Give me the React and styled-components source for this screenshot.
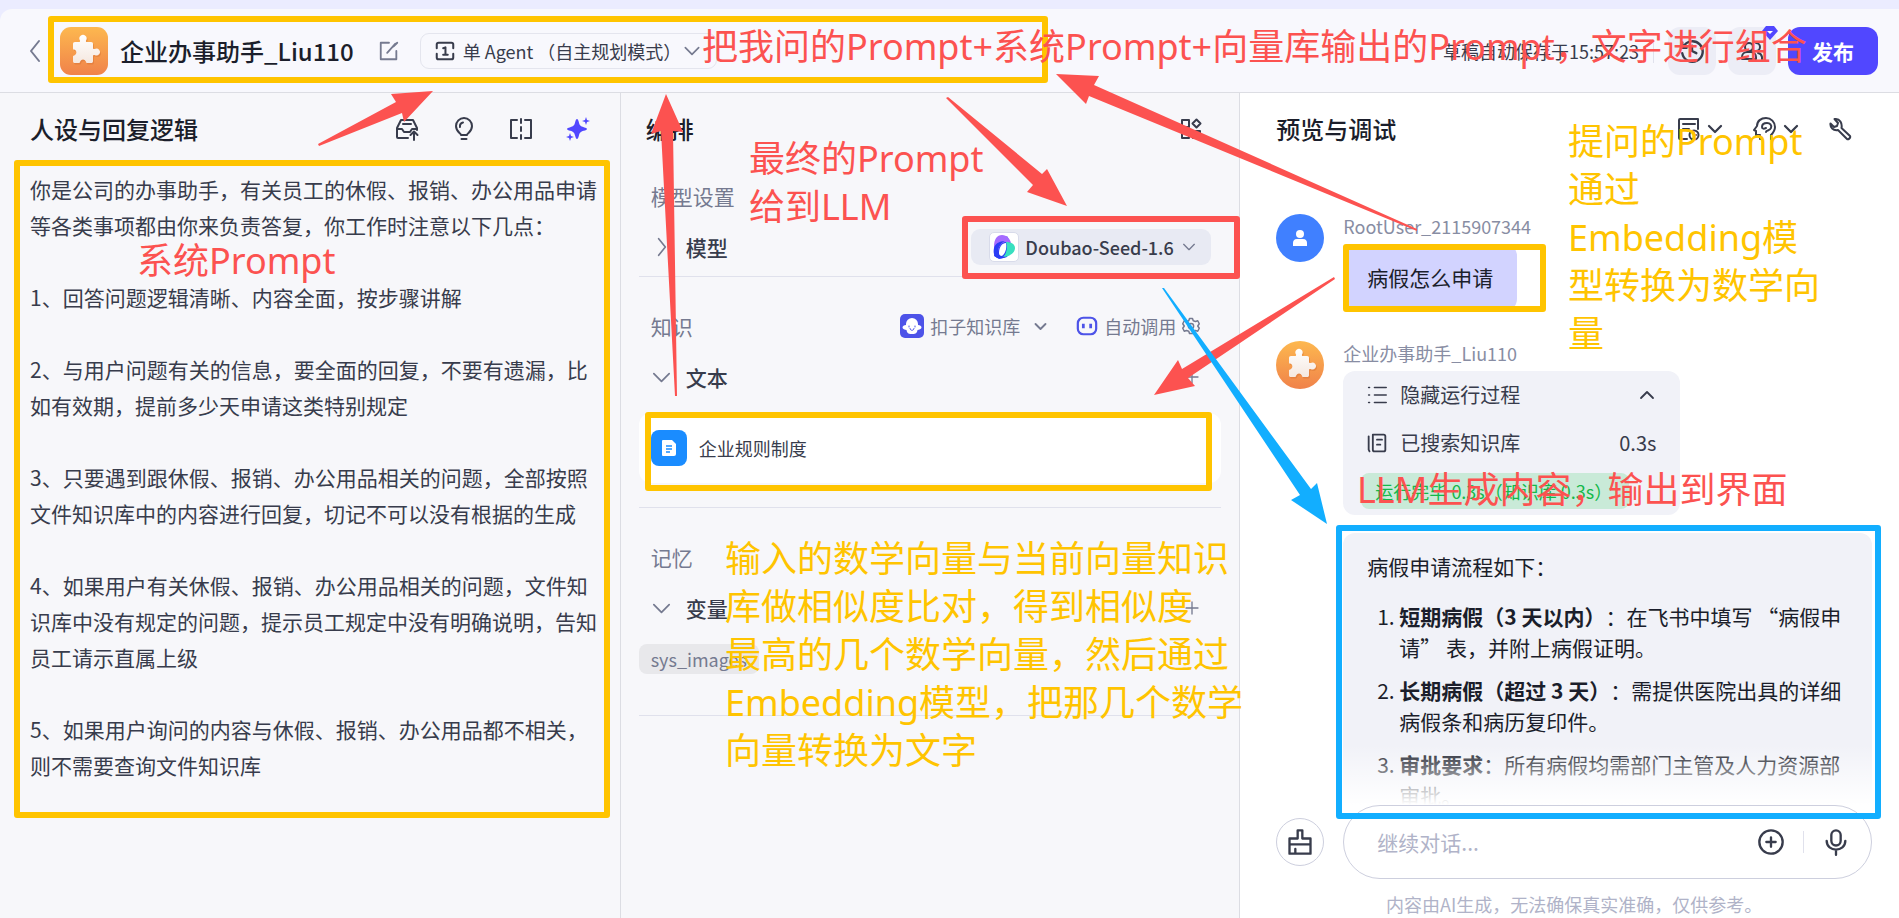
import React from 'react';
import styled, { createGlobalStyle, css } from 'styled-components';

// ! 颜色
const colors = {
  ink: '#1b1e2b',
  text: '#383c4c',
  sub: '#757a90',
  faint: '#b0b3c8',
  line: '#e0e1ec',
  brand: '#5147ff',
  red: '#fc5250',
  yellow: '#ffc400',
  blue: '#12aeff',
};

const PROMPT = `你是公司的办事助手，有关员工的休假、报销、办公用品申请等各类事项都由你来负责答复，你工作时注意以下几点：

1、回答问题逻辑清晰、内容全面，按步骤讲解

2、与用户问题有关的信息，要全面的回复，不要有遗漏，比如有效期，提前多少天申请这类特别规定

3、只要遇到跟休假、报销、办公用品相关的问题，全部按照文件知识库中的内容进行回复，切记不可以没有根据的生成

4、如果用户有关休假、报销、办公用品相关的问题，文件知识库中没有规定的问题，提示员工规定中没有明确说明，告知员工请示直属上级

5、如果用户询问的内容与休假、报销、办公用品都不相关，则不需要查询文件知识库`;

const STEPS = [
  { title: '短期病假（3 天以内）', body: '：在飞书中填写 “病假申请” 表，并附上病假证明。' },
  { title: '长期病假（超过 3 天）', body: '：需提供医院出具的详细病假条和病历复印件。' },
  { title: '审批要求', body: '：所有病假均需部门主管及人力资源部审批。' },
];

// * 标注：方框、箭头、文字
const FRAMES = [
  { x: 48, y: 16, w: 1000, h: 67, color: colors.yellow },
  { x: 14, y: 160, w: 596, h: 658, color: colors.yellow },
  { x: 645, y: 412, w: 567, h: 79, color: colors.yellow },
  { x: 1343, y: 244, w: 203, h: 68, color: colors.yellow },
  { x: 962, y: 216, w: 278, h: 63, color: colors.red },
  { x: 1336, y: 525, w: 545, h: 294, color: colors.blue },
];

const ARROWS = [
  { color: colors.red, points: '318,144 319,146 402,113 404,122 433,91 391,94 396,102' },
  { color: colors.red, points: '675,396 661,131 651,134 666,94 683,132 673,131 677,396' },
  { color: colors.red, points: '948,97 1042,174 1047,169 1067,206 1027,192 1033,185 946,98' },
  { color: colors.red, points: '1417,231 1089,96 1086,104 1056,74 1099,76 1094,85 1417,229' },
  { color: colors.red, points: '1334,277 1182,369 1178,360 1154,395 1195,386 1188,378 1335,279' },
  { color: colors.blue, points: '1162,288 1300,495 1291,500 1327,524 1317,483 1311,489 1164,288' },
];

const NOTES = [
  { x: 702, y: 23, color: colors.red, text: '把我问的Prompt+系统Prompt+向量库输出的Prompt，文字进行组合' },
  { x: 137, y: 237, color: colors.red, text: '系统Prompt' },
  { x: 749, y: 135, color: colors.red, text: '最终的Prompt\n给到LLM' },
  { x: 725, y: 535, color: colors.yellow, text: '输入的数学向量与当前向量知识\n库做相似度比对，得到相似度\n最高的几个数学向量，然后通过\nEmbedding模型，把那几个数学\n向量转换为文字' },
  { x: 1568, y: 118, color: colors.yellow, text: '提问的Prompt\n通过\nEmbedding模\n型转换为数学向\n量' },
  { x: 1357, y: 466, color: colors.red, text: 'LLM生成内容，输出到界面' },
];

const Icon = ({ size = 24, stroke = 2, color, children }) => (
  <svg width={size} height={size} viewBox="0 0 24 24" fill="none" stroke={color || 'currentColor'} strokeWidth={stroke} strokeLinejoin="round" strokeLinecap="round" aria-hidden="true">
    {children}
  </svg>
);

const Chevron = ({ dir = 'down', size = 18, stroke = 2, color }) => {
  const path = { down: 'M4 8l8 8 8-8', up: 'M4 16l8-8 8 8', left: 'M16 2L8 12l8 10', right: 'M8 2l8 10-8 10' }[dir];
  return <Icon size={size} stroke={stroke} color={color}><path d={path} /></Icon>;
};

const Plus = () => <Icon size={16} stroke={2}><path d="M12 3v18M3 12h18" /></Icon>;

const PUZZLE_PATH = 'M14 15h5c1 0 1.300-.8 1-1.600a3.600 3.600 0 1 1 6 0c-.3.800 0 1.600 1 1.600h4c1.500 0 2 .7 2 2v4c0 1 .8 1.300 1.600 1a3.500 3.500 0 1 1 0 6c-.8-.3-1.600 0-1.600 1v5c0 1.400-.6 2-2 2h-4c-1 0-1-.9-1.300-1.700a3 3 0 0 0-5.400 0c-.3.800-.3 1.700-1.300 1.700h-4c-1.400 0-2-.6-2-2v-4.500c0-1 .9-1 1.700-1.300a3 3 0 0 0 0-5.400c-.8-.3-1.700-.3-1.700-1.300V17c0-1.300.6-2 2-2z';

const Puzzle = ({ size, round }) => (
  <svg width={size} height={size} viewBox="0 0 48 48" aria-hidden="true">
    <defs>
      <linearGradient id="puzzleBg" x1="0" y1="0" x2="0" y2="1">
        <stop offset="0" stopColor="#fdb84f" />
        <stop offset="1" stopColor="#f0824a" />
      </linearGradient>
      <linearGradient id="puzzleFg" x1="0" y1="0" x2="0" y2="1">
        <stop offset="0" stopColor="#fff" />
        <stop offset="1" stopColor="#f5e8e0" />
      </linearGradient>
    </defs>
    <rect width="48" height="48" rx={round ? 24 : 11} fill="url(#puzzleBg)" />
    <path transform="translate(1 1.5)" d={PUZZLE_PATH} fill="#c65f28" opacity="0.3" />
    <path d={PUZZLE_PATH} fill="url(#puzzleFg)" />
  </svg>
);

const TopBar = () => (
  <Header>
    <BackButton aria-label="返回"><Chevron dir="left" size={24} stroke={2} /></BackButton>
    <Puzzle size={48} />
    <AppName>企业办事助手_Liu110</AppName>
    <IconButton aria-label="编辑">
      <Icon size={22} stroke={2}><path d="M12 3H3v18h17v-9M21 3l-4 4" /><path d="M10 14l9-10" /></Icon>
    </IconButton>
    <ModePicker>
      <Icon size={22} stroke={2.200}>
        <path d="M3 9V5a2 2 0 0 1 2-2h14a2 2 0 0 1 2 2v4M3 15v4a2 2 0 0 0 2 2h14a2 2 0 0 0 2-2v-4" />
        <path d="M10 9l2.500-1v8M10 16h5" />
      </Icon>
      <Select aria-label="Agent 模式"><option>单 Agent （自主规划模式）</option></Select>
      <Chevron size={20} stroke={2} color={colors.sub} />
    </ModePicker>
    <HeaderRight>
      <SavedText>草稿自动保存于15:57:23</SavedText>
      <HeaderDivider />
      <SquareButton aria-label="历史">
        <Icon size={26} stroke={2.200}><path d="M4 8a9.500 9.500 0 1 1-1 6M3 4v5h4" /><path d="M12 7v5l4 2" /></Icon>
      </SquareButton>
      <SquareButton aria-label="协作">
        <Icon size={24} stroke={2}><circle cx="9" cy="8" r="4" /><path d="M2 20v-2a5 5 0 0 1 5-5h4a5 5 0 0 1 5 5v2zM16 4a4 4 0 0 1 0 8M18 14a5 5 0 0 1 4 4v2" /></Icon>
        <ProBadge>
          <svg width="16" height="14" viewBox="0 0 16 14" aria-hidden="true"><path d="M4 0h8l4 5-8 9-8-9z" fill={colors.brand} /><path d="M5 5h6L8 8z" fill="#fff" /></svg>
        </ProBadge>
      </SquareButton>
      <PublishButton>发布</PublishButton>
    </HeaderRight>
  </Header>
);

const PersonaPanel = () => (
  <Panel>
    <PanelHead>
      <PanelTitle>人设与回复逻辑</PanelTitle>
      <PanelTools $gap="33px">
        <IconButton aria-label="提交到提示词库">
          <Icon><path d="M2 11l4-8h12l4 8v2M2 11v9a1 1 0 0 0 1 1h10M2 12h5l2 3h6l2-3h5M8 7h8" /><path d="M19 23v-8M15.500 18l3.500-3.500 3.500 3.500" /></Icon>
        </IconButton>
        <IconButton aria-label="提示词库">
          <Icon><path d="M9 18c0-2-5-3-5-9a8 8 0 0 1 16 0c0 6-5 7-5 9zM9.500 22h5" /><path d="M8 10a4 4 0 0 1 3-4.500" /></Icon>
        </IconButton>
        <IconButton aria-label="对比">
          <Icon><path d="M8 3H2v18h6M16 3h6v18h-6" /><path d="M12 2v4M12 10v4M12 18v4" /></Icon>
        </IconButton>
        <IconButton aria-label="自动优化">
          <svg width="24" height="24" viewBox="0 0 24 24" fill={colors.brand} aria-hidden="true">
            <path d="M11 2c.8 0 1.300 1 1.800 3 .9 3.500 1.600 4.200 5 5.200 1.800.6 3.200 1 3.200 1.800s-1.400 1.300-3.200 1.800c-3.400 1-4.100 1.700-5 5.200-.5 2-1 3-1.800 3s-1.300-1-1.800-3c-.9-3.500-1.600-4.200-5-5.200C2.400 13.300 1 12.800 1 12s1.400-1.200 3.200-1.800c3.400-1 4.100-1.700 5-5.200.5-2 1-3 1.800-3z" />
            <path d="M20 0l1 3 3 1-3 1-1 3-1-3-3-1 3-1zM4 16l1 3 3 1-3 1-1 3-1-3-3-1 3-1z" />
          </svg>
        </IconButton>
      </PanelTools>
    </PanelHead>
    <PromptInput aria-label="人设与回复逻辑" spellCheck={false} defaultValue={PROMPT} />
  </Panel>
);

const ArrangePanel = () => (
  <Panel>
    <PanelHead>
      <PanelTitle>编排</PanelTitle>
      <PanelTools>
        <IconButton aria-label="应用">
          <Icon><path d="M3 3h7v7H3zM3 14h7v7H3zM14 14h7v7h-7zM17.500 2.500l4 4-4 4-4-4z" /></Icon>
        </IconButton>
      </PanelTools>
    </PanelHead>
    <Settings>
      <Section>
        <SectionHead>模型设置</SectionHead>
        <FoldRow>
          <FoldButton aria-label="展开模型"><Chevron dir="right" size={20} /></FoldButton>
          <FoldTitle>模型</FoldTitle>
          <ModelPicker>
            <ModelLogo>
              <svg width="22" height="24" viewBox="0 0 22 24" aria-hidden="true">
                <path d="M14 1l3 6 1 5-4 10-8 2-5-3 2-9z" fill="#2a3cf5" />
                <path d="M1 12C1 4 4 0 9 0c5 0 8 4 9 8l-5-1c-5 0-8 6-8 11-3-1-4-3-4-6z" fill="#a56bff" />
                <path d="M13 7c5 0 9 2 9 6 0 5-6 9-12 9 3-3 5-8 3-15z" fill="#38dfc0" />
                <path d="M6 18c0-6 3-10 7-10 1 6-1 11-4 13-2 0-3-1-3-3z" fill="#fff" />
                <path d="M1 13c-1 5 0 9 4 10 3 1 6 0 8-1-5 0-8-1-8-5 0-5 3-9 7-11C6 6 2 9 1 13z" fill="#2a3cf5" />
              </svg>
            </ModelLogo>
            <Select $bold aria-label="模型"><option>Doubao-Seed-1.6</option></Select>
            <Chevron size={16} color={colors.sub} />
          </ModelPicker>
        </FoldRow>
      </Section>
      <Section>
        <SectionHead>
          知识
          <SectionTools>
            <KnowledgePicker>
              <svg width="24" height="24" viewBox="0 0 24 24" aria-hidden="true">
                <rect width="24" height="24" rx="5" fill="#4d53e8" />
                <path d="M12 4a6 6 0 0 1 6 6v1c2 0 3.500 1 3.500 2.500S19 16 17.500 16c-.5 4-3 4-5.500 4s-5 0-5.500-4C5 16 2.500 15 2.500 13.500S4 11 6 11v-1a6 6 0 0 1 6-6z" fill="#fff" />
                <path d="M10 14.500c0 2.500 4 2.500 4 0M9 12v1M15 12v1" stroke="#4d53e8" fill="none" strokeLinecap="round" />
              </svg>
              <Select $muted aria-label="知识库来源"><option>扣子知识库</option></Select>
              <Chevron size={15} stroke={3} color={colors.sub} />
            </KnowledgePicker>
            <CallButton>
              <Icon size={22} stroke={2.400} color="#4d53e8"><rect x="2" y="3" width="20" height="18" rx="6" /><path d="M8 11v2M16 11v2" strokeWidth="3" strokeLinecap="square" /></Icon>
              自动调用
              <Icon size={18} stroke={2}>
                <path d="M9 5l1-3h4l1 3 3 1 3-1 2 4-2 3 2 3-2 4-3-1-3 1-1 3h-4l-1-3-3-1-3 1-2-4 2-3-2-3 2-4 3 1z" />
                <circle cx="12" cy="12" r="3.500" />
              </Icon>
            </CallButton>
          </SectionTools>
        </SectionHead>
        <FoldRow>
          <FoldButton aria-label="收起文本"><Chevron size={23} stroke={1.800} /></FoldButton>
          <FoldTitle>文本</FoldTitle>
          <AddButton aria-label="添加文本"><Plus /></AddButton>
        </FoldRow>
        <FileCard>
          <FileIcon>
            <svg width="16" height="18" viewBox="0 0 16 18" aria-hidden="true"><path d="M2 1h9l4 4v10a2 2 0 0 1-2 2H2a1 1 0 0 1-1-1V2a1 1 0 0 1 1-1z" fill="#fff" /><path d="M5 7h6M5 10h6M5 13h4" stroke="#1a8cff" strokeWidth="1.500" /></svg>
          </FileIcon>
          企业规则制度
        </FileCard>
      </Section>
      <Section>
        <SectionHead>记忆</SectionHead>
        <FoldRow>
          <FoldButton aria-label="收起变量"><Chevron size={23} stroke={1.800} /></FoldButton>
          <FoldTitle>变量</FoldTitle>
          <AddButton aria-label="添加变量"><Plus /></AddButton>
        </FoldRow>
        <VariableTag>sys_images</VariableTag>
      </Section>
    </Settings>
  </Panel>
);

const PreviewPanel = () => (
  <Panel $white>
    <PanelHead>
      <PanelTitle>预览与调试</PanelTitle>
      <PanelTools $gap="29px">
        <MenuButton aria-label="记忆">
          <Icon><path d="M10 22H3a1 1 0 0 1-1-1V3a1 1 0 0 1 1-1h18v10M6 7h12M6 12h6" /><circle cx="17" cy="18" r="4.500" /><path d="M17 16v2h2" /></Icon>
          <Chevron size={18} stroke={3} />
        </MenuButton>
        <MenuButton aria-label="调试模型">
          <Icon><path d="M7 22v-4H3v-4l-2-1 3-4c0-5 4-8 9-8s9 4 9 9c0 4-2 6-4 8v4" /><path d="M9 10c0-3 2-4 5-4s5 2 4 5-5 2-5 4M9 10c0 2 2 2 4 1" /></Icon>
          <Chevron size={18} stroke={3} />
        </MenuButton>
        <IconButton aria-label="工具">
          <Icon><path d="M7 2L5.500 2 9 6l-1 3-3 1-3.500-3.500C1 10 4 14 9 13l9 9c1 1 4-1 3-3l-8.500-8C13.500 6 10.500 2 7 2z" /></Icon>
        </IconButton>
      </PanelTools>
    </PanelHead>
    <Messages>
      <Message>
        <UserAvatar>
          <svg width="18" height="18" viewBox="0 0 18 18" fill="#fff" aria-hidden="true"><circle cx="9" cy="5" r="4" /><path d="M2 17v-3c0-2 1-4 4-4h6c3 0 4 2 4 4v3z" /></svg>
        </UserAvatar>
        <MessageBody>
          <Sender>RootUser_2115907344</Sender>
          <UserBubble>病假怎么申请</UserBubble>
        </MessageBody>
      </Message>
      <Message>
        <Puzzle size={48} round />
        <MessageBody>
          <Sender>企业办事助手_Liu110</Sender>
          <RunCard>
            <RunRow>
              <Icon size={20} stroke={2}><path d="M9 3h14M9 12h14M9 21h14M2 3h1M2 12h1M2 21h1" /></Icon>
              隐藏运行过程
              <RunEnd as="button" aria-label="收起运行过程"><Chevron dir="up" size={18} stroke={2.400} /></RunEnd>
            </RunRow>
            <RunRow>
              <Icon size={20} stroke={2.200}><path d="M7 2h13a2 2 0 0 1 2 2v16a2 2 0 0 1-2 2H9a2 2 0 0 1-2-2zM2 4v16l1 2M12 8h6M12 14h4" /></Icon>
              已搜索知识库
              <RunEnd>0.3s</RunEnd>
            </RunRow>
            <RunDone>运行完毕 0.3s（知识库 0.3s）</RunDone>
          </RunCard>
          <AnswerBubble>
            <p>病假申请流程如下：</p>
            <ol>
              {STEPS.map((step) => (
                <li key={step.title}><strong>{step.title}</strong>{step.body}</li>
              ))}
            </ol>
          </AnswerBubble>
        </MessageBody>
      </Message>
      <Fade />
    </Messages>
    <Composer>
      <ClearButton aria-label="清空对话">
        <Icon size={28} stroke={2}><path d="M3 9h7V2h4v7h7v13H3zM3 14h18M8 18v4" /></Icon>
      </ClearButton>
      <InputBox>
        <ChatInput aria-label="继续对话" placeholder="继续对话..." />
        <IconButton aria-label="添加附件"><Icon size={28} stroke={2}><circle cx="12" cy="12" r="10" /><path d="M12 8v8M8 12h8" /></Icon></IconButton>
        <InputDivider />
        <IconButton aria-label="语音输入"><Icon size={28} stroke={2}><rect x="8" y="2" width="8" height="13" rx="4" /><path d="M4 11c0 10 16 10 16 0M12 19v4" /></Icon></IconButton>
      </InputBox>
    </Composer>
    <Disclaimer>内容由AI生成，无法确保真实准确，仅供参考。</Disclaimer>
  </Panel>
);

const Annotations = () => (
  <Overlay>
    {FRAMES.map((frame) => (
      <Frame key={`${frame.x}-${frame.y}`} $x={frame.x} $y={frame.y} $w={frame.w} $h={frame.h} $color={frame.color} />
    ))}
    <ArrowLayer aria-hidden="true">
      {ARROWS.map((arrow) => <polygon key={arrow.points} points={arrow.points} fill={arrow.color} />)}
    </ArrowLayer>
    {NOTES.map((note) => (
      <Note key={note.text} $x={note.x} $y={note.y} $color={note.color}>{note.text}</Note>
    ))}
  </Overlay>
);

const App = () => (
  <>
    <GlobalStyle />
    <Page>
      <TopStrip />
      <TopBar />
      <Columns>
        <PersonaPanel />
        <ArrangePanel />
        <PreviewPanel />
      </Columns>
      <Annotations />
    </Page>
  </>
);

export default App;

const GlobalStyle = createGlobalStyle`
  * {
    box-sizing: border-box;
    margin: 0;
    padding: 0;
  }

  body {
    background: #ebecff;
    color: ${colors.ink};
    font-family: "Noto Sans CJK SC", "Noto Sans", sans-serif;
    font-size: 18px;
    line-height: 24px;
  }

  button, input, select, textarea {
    border: none;
    outline: none;
    background: transparent;
    color: inherit;
    font: inherit;
  }

  svg {
    display: block;
    flex-shrink: 0;
  }
`;

const Page = styled.div`
  height: 100vh;
  display: flex;
  flex-direction: column;
  position: relative;
  overflow: hidden;
`;

const TopStrip = styled.div`
  height: 9px;
  flex-shrink: 0;
`;

const Header = styled.header`
  height: 84px;
  flex-shrink: 0;
  padding: 0 21px 0 23px;
  display: flex;
  align-items: center;
  background: #f8f8fd;
  border-bottom: 1px solid #dcdde3;
  border-top-left-radius: 12px;
`;

const IconButton = styled.button`
  display: flex;
  align-items: center;
  justify-content: center;
  color: ${colors.text};
  cursor: pointer;
`;

const BackButton = styled(IconButton)`
  width: 24px;
  margin-right: 13px;
  color: ${colors.sub};
`;

const AppName = styled.h1`
  margin: 0 24px 0 12px;
  font-size: 24px;
  font-weight: 500;
  line-height: 36px;

  & + button {
    color: ${colors.sub};
  }
`;

const pickerStyle = css`
  display: flex;
  align-items: center;
  border-radius: 9px;
`;

const ModePicker = styled.label`
  ${pickerStyle}
  height: 36px;
  margin-left: 20px;
  padding: 0 14px 0 13px;
  border: 1px solid #e4e5ee;
  color: ${colors.text};

  & > svg:first-child {
    margin-right: 7px;
  }
`;

const Select = styled.select`
  appearance: none;
  font-weight: ${({ $bold }) => ($bold ? 500 : 400)};
  color: ${({ $muted }) => ($muted ? colors.sub : colors.text)};
  cursor: pointer;
`;

const HeaderRight = styled.div`
  margin-left: auto;
  display: flex;
  align-items: center;
  gap: 12px;
`;

const SavedText = styled.span`
  color: ${colors.text};
`;

const HeaderDivider = styled.i`
  width: 1px;
  height: 24px;
  margin: 0 2px;
  background: ${colors.line};
`;

const SquareButton = styled(IconButton)`
  width: 48px;
  height: 48px;
  position: relative;
  border-radius: 12px;
  background: #ecedf6;
`;

const ProBadge = styled.span`
  position: absolute;
  top: -1px;
  right: -2px;
`;

const PublishButton = styled.button`
  width: 90px;
  height: 48px;
  border-radius: 12px;
  background: ${colors.brand};
  color: #fff;
  font-size: 21px;
  font-weight: 700;
  cursor: pointer;
`;

const Columns = styled.main`
  flex: 1;
  min-height: 0;
  display: grid;
  grid-template-columns: 62fr 62fr 66fr;
`;

const Panel = styled.section`
  min-width: 0;
  min-height: 0;
  display: flex;
  flex-direction: column;
  background: ${({ $white }) => ($white ? '#fff' : '#f7f7fa')};

  & + & {
    border-left: 1px solid #dcdde3;
  }
`;

const PanelHead = styled.div`
  height: 72px;
  flex-shrink: 0;
  padding: 0 30px;
  display: flex;
  align-items: center;
  justify-content: space-between;

  ${Panel} + ${Panel} > & {
    padding: 0 36px 0 25px;
  }

  ${Panel}:last-child > & {
    padding: 0 46px 0 36px;
  }
`;

const PanelTitle = styled.h2`
  font-size: 24px;
  font-weight: 500;
  line-height: 36px;
`;

const PanelTools = styled.div`
  display: flex;
  align-items: center;
  gap: ${({ $gap }) => $gap || '0'};
`;

const MenuButton = styled(IconButton)`
  gap: 5px;
`;

const PromptInput = styled.textarea`
  flex: 1;
  padding: 6px 20px 0 30px;
  resize: none;
  color: ${colors.text};
  font-size: 21px;
  line-height: 36px;
`;

const Settings = styled.div`
  padding: 0 18px;
  color: ${colors.sub};
`;

const Section = styled.div`
  padding-top: 24px;
  border-bottom: 1px solid ${colors.line};

  &:first-child {
    padding: 6px 0 3px;
  }

  &:last-child {
    padding-bottom: 41px;
  }
`;

const SectionHead = styled.h3`
  height: 50px;
  padding: 0 21px 0 12px;
  display: flex;
  align-items: center;
  justify-content: space-between;
  font-size: 21px;
  font-weight: 400;
`;

const SectionTools = styled.div`
  display: flex;
  align-items: center;
  gap: 28px;
  font-size: 18px;
`;

const FoldRow = styled.div`
  height: 52px;
  padding: 0 10px 0 12px;
  display: flex;
  align-items: center;
`;

const FoldButton = styled(IconButton)`
  width: 22px;
  margin-right: 13px;
  color: ${colors.sub};
`;

const FoldTitle = styled.h4`
  margin-right: auto;
  color: ${colors.text};
  font-size: 21px;
  font-weight: 500;
`;

const ModelPicker = styled.label`
  ${pickerStyle}
  width: 240px;
  height: 36px;
  padding: 0 14px 0 18px;
  gap: 6px;
  background: #e8eaf3;

  & > select {
    flex: 1;
  }
`;

const ModelLogo = styled.span`
  width: 30px;
  height: 30px;
  display: flex;
  align-items: center;
  justify-content: center;
  border: 1px solid #d8dbea;
  border-radius: 5px;
  background: #fff;
`;

const KnowledgePicker = styled.label`
  ${pickerStyle}
  gap: 6px;

  & > select {
    margin-right: 7px;
  }
`;

const CallButton = styled.button`
  display: flex;
  align-items: center;
  gap: 6px;
  cursor: pointer;
`;

const AddButton = styled(IconButton)`
  margin-right: 11px;
  color: ${colors.sub};
`;

const FileCard = styled.div`
  height: 70px;
  margin: 10px 0 24px;
  padding: 0 12px;
  display: flex;
  align-items: center;
  gap: 12px;
  border-radius: 12px;
  background: #fff;
  color: ${colors.text};
`;

const FileIcon = styled.span`
  width: 36px;
  height: 36px;
  display: flex;
  align-items: center;
  justify-content: center;
  border-radius: 8px;
  background: #1a8cff;
`;

const VariableTag = styled.span`
  height: 30px;
  margin-top: 10px;
  padding: 0 12px;
  display: inline-flex;
  align-items: center;
  border-radius: 8px;
  background: #e8e8eb;
`;

const Messages = styled.div`
  flex: 1;
  min-height: 0;
  padding: 49px 27px 0 36px;
  position: relative;
  overflow: hidden;
`;

const Message = styled.div`
  margin-bottom: 30px;
  display: flex;
  align-items: flex-start;
  gap: 19px;
`;

const UserAvatar = styled.span`
  width: 48px;
  height: 48px;
  flex-shrink: 0;
  display: flex;
  align-items: center;
  justify-content: center;
  border-radius: 50%;
  background: #4080ff;
`;

const MessageBody = styled.div`
  flex: 1;
  min-width: 0;
  display: flex;
  flex-direction: column;
  align-items: flex-start;
`;

const Sender = styled.span`
  margin-bottom: 6px;
  color: #888da3;
`;

const UserBubble = styled.div`
  padding: 18px 24px;
  border-radius: 12px;
  background: #d2d3ff;
  font-size: 21px;
  line-height: 31px;
`;

const RunCard = styled.div`
  width: 337px;
  height: 144px;
  border-radius: 12px;
  background: #f1f2f8;
`;

const RunRow = styled.div`
  height: 48px;
  padding: 0 24px;
  display: flex;
  align-items: center;
  gap: 13px;
  color: ${colors.text};
  font-size: 20px;
`;

const RunEnd = styled.span`
  margin-left: auto;
`;

const RunDone = styled.span`
  height: 36px;
  width: 268px;
  margin: 6px 18px;
  padding: 0 14px;
  display: flex;
  align-items: center;
  border-radius: 8px;
  background: #c9ead8;
  color: #14b84a;
  white-space: nowrap;
`;

const AnswerBubble = styled.div`
  width: 100%;
  margin-top: 18px;
  padding: 18px 24px;
  border-radius: 12px;
  background: #f1f2f8;
  font-size: 21px;
  line-height: 31px;
  text-spacing-trim: space-all;

  & > ol {
    margin-top: 19px;
    padding-left: 32px;
  }

  & li {
    margin-bottom: 12px;
  }
`;

const Fade = styled.div`
  height: 60px;
  position: absolute;
  right: 0;
  bottom: 0;
  left: 0;
  background: linear-gradient(rgba(255, 255, 255, 0), #fff);
`;

const Composer = styled.div`
  padding: 0 27px 0 36px;
  display: flex;
  align-items: center;
  gap: 19px;
`;

const ClearButton = styled(IconButton)`
  width: 48px;
  height: 48px;
  border: 1px solid #cdcfde;
  border-radius: 50%;
`;

const InputBox = styled.div`
  height: 74px;
  flex: 1;
  padding: 0 21px 0 33px;
  display: flex;
  align-items: center;
  gap: 18px;
  border: 1px solid #cdcfde;
  border-radius: 37px;
`;

const ChatInput = styled.input`
  flex: 1;
  min-width: 0;
  font-size: 21px;
  line-height: 31px;

  &::placeholder {
    color: ${colors.faint};
  }
`;

const InputDivider = styled.i`
  width: 1px;
  height: 22px;
  background: ${colors.line};
`;

const Disclaimer = styled.p`
  padding: 13px 0 2px 9px;
  color: ${colors.faint};
  text-align: center;
`;

const Overlay = styled.div`
  position: absolute;
  inset: 0;
  pointer-events: none;
`;

const Frame = styled.div`
  position: absolute;
  left: ${({ $x }) => $x}px;
  top: ${({ $y }) => $y}px;
  width: ${({ $w }) => $w}px;
  height: ${({ $h }) => $h}px;
  border: 6px solid ${({ $color }) => $color};
  border-radius: 3px;
`;

const ArrowLayer = styled.svg`
  width: 100%;
  height: 100%;
  position: absolute;
  inset: 0;
`;

const Note = styled.p`
  position: absolute;
  left: ${({ $x }) => $x}px;
  top: ${({ $y }) => $y}px;
  color: ${({ $color }) => $color};
  font-family: "Noto Sans", "Noto Sans CJK SC", sans-serif;
  font-size: 36px;
  font-weight: 400;
  line-height: 48px;
  white-space: pre;
`;
